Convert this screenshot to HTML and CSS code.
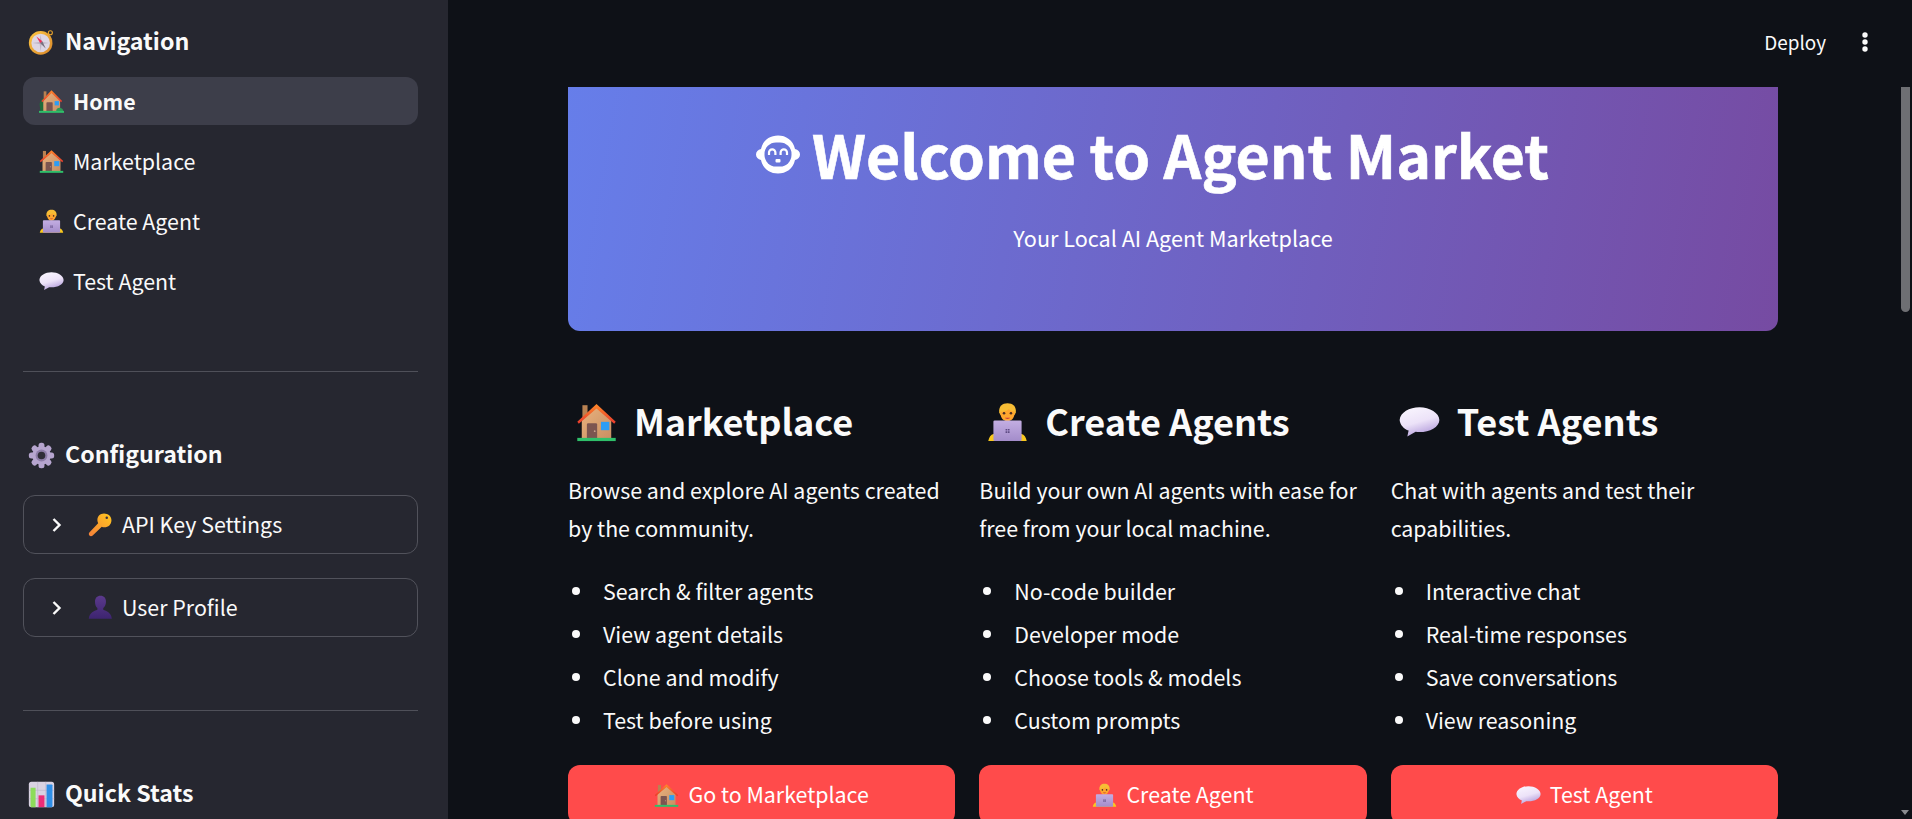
FILE: index.html
```html
<!DOCTYPE html>
<html>
<head>
    <meta charset="utf-8">
    <title>Agent Market</title>
    <link rel="stylesheet" href="styles.css">
</head>
<body>
    <!-- emoji drawn once here, reused with <use> -->
    <svg class="sprite" xmlns="http://www.w3.org/2000/svg">
        <defs>
            <linearGradient id="wall" x1="0" y1="0" x2="1" y2="1"><stop offset="0" stop-color="#e8b27e"/><stop offset="1" stop-color="#c98f63"/></linearGradient>
            <linearGradient id="roof" x1="0" y1="0" x2="0" y2="1"><stop offset="0" stop-color="#ff8a2a"/><stop offset="1" stop-color="#e8392c"/></linearGradient>
            <linearGradient id="bubble" x1="0" y1="0" x2="0.4" y2="1"><stop offset="0" stop-color="#fbf8ff"/><stop offset="0.6" stop-color="#ece2f8"/><stop offset="1" stop-color="#b9a4de"/></linearGradient>
            <linearGradient id="laptop" x1="0" y1="0" x2="0" y2="1"><stop offset="0" stop-color="#c3aee2"/><stop offset="1" stop-color="#a38cca"/></linearGradient>
            <linearGradient id="ring" x1="0" y1="0" x2="1" y2="1"><stop offset="0" stop-color="#ffc842"/><stop offset="1" stop-color="#d8862a"/></linearGradient>
            <linearGradient id="keygrad" x1="1" y1="0" x2="0" y2="1"><stop offset="0" stop-color="#ffc61e"/><stop offset="1" stop-color="#f5803a"/></linearGradient>
            <linearGradient id="bust" x1="0" y1="0" x2="0" y2="1"><stop offset="0" stop-color="#5b3a8c"/><stop offset="1" stop-color="#3d2470"/></linearGradient>
            <symbol id="e-house" viewBox="0 0 32 32">
                <rect x="5" y="2.500" width="4" height="10" fill="#b98252"/>
                <path d="M4.500 14 16 4.500 27.500 14v14h-23z" fill="url(#wall)"/>
                <path d="M1 15.500 16 1.500l15 14-1.200 1.400L16 5 2.200 16.900z" fill="url(#roof)"/>
                <path d="M8.500 28V17.500a1 1 0 0 1 1-1h6a1 1 0 0 1 1 1V28z" fill="#7c5550"/>
                <circle cx="14.600" cy="22.800" r=".7" fill="#c9a08e"/>
                <rect x="19.500" y="15.500" width="6.500" height="6.500" fill="#2e9df4"/>
                <rect x="1" y="28" width="30" height="2.500" fill="#2fc06a"/>
            </symbol>
            <symbol id="e-garden" viewBox="0 0 32 32">
                <path d="M1 22c-1-4 1-7 2.500-9 2-2 4-1 4 2v14H2z" fill="#1f6b3a"/>
                <rect x="6" y="3" width="3.500" height="9" fill="#b98252"/>
                <path d="M5.500 14 16 4.500 27 14v14H5.500z" fill="url(#wall)"/>
                <path d="M3 15.500 16 1.500l13.500 14-1.200 1.400L16 5 4.200 16.900z" fill="url(#roof)"/>
                <path d="M9.500 28V18a1 1 0 0 1 1-1h6a1 1 0 0 1 1 1v10z" fill="#7c5550"/>
                <rect x="20" y="15.500" width="5.500" height="5.500" fill="#2e9df4"/>
                <path d="M22 28c0-3 3-4.500 5-4s4 2 4 4z" fill="#2f9a55"/>
                <rect x="0" y="28" width="32" height="2.500" fill="#2fc06a"/>
            </symbol>
            <symbol id="e-coder" viewBox="0 0 32 32">
                <path d="M9.500 8C9 3.500 12 1 16 1s7 2.500 6.500 7l-.8 2H10.300z" fill="#f7bd35"/>
                <path d="M10.500 7.500c2 .5 5-.2 6.500-2 1.200 1.500 3 2 4.500 2 .3 4-1.500 7.500-5.500 7.500s-5.800-3.500-5.500-7.500z" fill="#ffa62e"/>
                <circle cx="13.300" cy="8.800" r="1" fill="#4a2f27"/>
                <circle cx="18.700" cy="8.800" r="1" fill="#4a2f27"/>
                <path d="M14 12.300h4c-.4 1.200-3.600 1.200-4 0z" fill="#c93a3a"/>
                <path d="M1 30.500c.5-3 2-5 4-5.500h22c2 .5 3.500 2.500 4 5.500z" fill="#f9c81e"/>
                <rect x="5" y="14.500" width="22" height="16" rx="1" fill="url(#laptop)"/>
                <path d="M14.500 21h1.300v1.300h-1.300zM16.300 21h1.300v1.300h-1.300zM14.500 22.800h1.300v1.300h-1.300zM16.300 22.800h1.300v1.300h-1.300z" fill="#5f4b84"/>
            </symbol>
            <symbol id="e-speech" viewBox="0 0 32 32">
                <path d="M16 4C8 4 1 8 .5 14c.3 4 3.500 7 7 8.300L6.500 27l6.500-3.700c1 .1 2 .2 3 .2 8 0 15.500-4 15.500-9.500S24 4 16 4z" fill="url(#bubble)"/>
            </symbol>
            <symbol id="e-compass" viewBox="0 0 32 32">
                <circle cx="26.500" cy="4.500" r="2.400" fill="none" stroke="#e8a42c" stroke-width="1.300"/>
                <circle cx="15" cy="16.500" r="14" fill="url(#ring)"/>
                <circle cx="15" cy="16.500" r="11" fill="#ddd6e4"/>
                <path d="M15 6.500 16.200 15.300 25 16.500 16.200 17.700 15 26.500 13.800 17.700 5 16.500 13.800 15.300z" fill="#bcb4c4"/>
                <path d="M10 9l7 5.500-2.500 2.500z" fill="#f0325a"/>
                <path d="M21 23l-6.500-6 2.500-2.500z" fill="#77707f"/>
            </symbol>
            <symbol id="e-gear" viewBox="0 0 32 32">
                <g fill="#b6a5cf">
                    <circle cx="16" cy="16" r="11"/>
                    <rect x="12.500" y="1" width="7" height="30" rx="3"/>
                    <rect x="12.500" y="1" width="7" height="30" rx="3" transform="rotate(45 16 16)"/>
                    <rect x="12.500" y="1" width="7" height="30" rx="3" transform="rotate(90 16 16)"/>
                    <rect x="12.500" y="1" width="7" height="30" rx="3" transform="rotate(135 16 16)"/>
                </g>
                <circle cx="16" cy="16" r="7" fill="#8d7da8"/>
                <circle cx="16" cy="16" r="4.500" fill="#2f2d38"/>
            </symbol>
            <symbol id="e-key" viewBox="0 0 32 32">
                <path d="M20.500 2c5 0 9.500 3.500 9.500 8.500 0 5.500-4 9-9 9-1.300 0-2.400-.2-3.400-.7L6 30c-1.200 1.200-3.200 1.200-4.200 0-1-1-1-2.800.2-4l11-11.500C12.500 13 12 12 12 10.500 12 5.500 15.500 2 20.500 2z" fill="url(#keygrad)"/>
                <circle cx="24" cy="7.500" r="1.600" fill="#3a3040"/>
            </symbol>
            <symbol id="e-bust" viewBox="0 0 32 32">
                <path d="M16 1c4.500 0 7 3 7 7.500 0 3.500-1.500 6.500-3.500 8v2.500c4 1.500 10 3.500 11 11.500H1c1-8 7-10 11-11.500v-2.500C10 15 9 12 9 8.500 9 4 11.500 1 16 1z" fill="url(#bust)"/>
            </symbol>
            <symbol id="e-chart" viewBox="0 0 32 32">
                <rect x="1" y="1" width="30" height="30" rx="3" fill="#d9d2e2"/>
                <path d="M11.500 1v30M21 1v30M1 11h30M1 21h30" stroke="#bfb6cc" stroke-width=".8"/>
                <path d="M3 8h6v23H4a1 1 0 0 1-1-1z" fill="#8ddc5a"/>
                <rect x="12.500" y="17" width="7" height="14" fill="#ec2d78"/>
                <path d="M22 4h6a1 1 0 0 1 1 1v25a1 1 0 0 1-1 1h-6z" fill="#2f8fe8"/>
            </symbol>
        </defs>
    </svg>

    <div class="app">
        <aside class="sidebar">
            <h3 class="side-title"><svg class="emoji-side"><use href="#e-compass"/></svg>Navigation</h3>
            <nav class="nav">
                <a class="nav-item active"><svg class="emoji-nav"><use href="#e-garden"/></svg>Home</a>
                <a class="nav-item"><svg class="emoji-nav"><use href="#e-house"/></svg>Marketplace</a>
                <a class="nav-item"><svg class="emoji-nav"><use href="#e-coder"/></svg>Create Agent</a>
                <a class="nav-item"><svg class="emoji-nav"><use href="#e-speech"/></svg>Test Agent</a>
            </nav>
            <hr class="side-rule first-rule">
            <h3 class="side-title"><svg class="emoji-side"><use href="#e-gear"/></svg>Configuration</h3>
            <div class="expander first-exp">
                <svg class="chevron" viewBox="0 0 10 14"><path d="M1.500 1l6 6-6 6" fill="none" stroke="#fafafa" stroke-width="2.400"/></svg>
                <svg class="emoji-nav"><use href="#e-key"/></svg>API Key Settings
            </div>
            <div class="expander">
                <svg class="chevron" viewBox="0 0 10 14"><path d="M1.500 1l6 6-6 6" fill="none" stroke="#fafafa" stroke-width="2.400"/></svg>
                <svg class="emoji-nav"><use href="#e-bust"/></svg>User Profile
            </div>
            <hr class="side-rule second-rule">
            <h3 class="side-title"><svg class="emoji-side"><use href="#e-chart"/></svg>Quick Stats</h3>
        </aside>

        <main class="main">
            <header class="topbar">
                <span class="deploy">Deploy</span>
                <svg class="menu-dots" viewBox="0 0 8 20"><circle cx="4" cy="3" r="2.700"/><circle cx="4" cy="10" r="2.700"/><circle cx="4" cy="17" r="2.700"/></svg>
            </header>
            <div class="scroll-area">
                <div class="content">
                    <section class="hero">
                        <h1 class="hero-title">
                            <svg class="robot" viewBox="0 0 46 39">
                                <path d="M6 14C8 5 15 .5 23 .5S38 5 40 14c3 .7 5 2.700 5 5.500S43 24.300 40 25C38 34 31 38.500 23 38.500S8 34 6 25c-3-.7-5-2.700-5-5.500S3 14.700 6 14z" fill="#fff"/>
                                <rect x="9.500" y="7.500" width="27" height="24" rx="11.500" fill="#6875da"/>
                                <path d="M14 20v-2.500a3.200 3.200 0 0 1 6.400 0V20M25.600 20v-2.500a3.200 3.200 0 0 1 6.400 0V20" fill="none" stroke="#fff" stroke-width="2.200"/>
                                <rect x="20.500" y="24" width="5" height="3.500" rx="1" fill="#fff"/>
                            </svg>Welcome to Agent Market
                        </h1>
                        <p class="hero-sub">Your Local AI Agent Marketplace</p>
                    </section>

                    <div class="columns">
                        <div class="col">
                            <h2 class="col-title"><svg class="emoji-head"><use href="#e-house"/></svg>Marketplace</h2>
                            <p>Browse and explore AI agents created by the community.</p>
                            <ul>
                                <li>Search &amp; filter agents</li>
                                <li>View agent details</li>
                                <li>Clone and modify</li>
                                <li>Test before using</li>
                            </ul>
                            <button class="action"><svg class="emoji-nav"><use href="#e-house"/></svg>Go to Marketplace</button>
                        </div>
                        <div class="col">
                            <h2 class="col-title"><svg class="emoji-head"><use href="#e-coder"/></svg>Create Agents</h2>
                            <p>Build your own AI agents with ease for free from your local machine.</p>
                            <ul>
                                <li>No-code builder</li>
                                <li>Developer mode</li>
                                <li>Choose tools &amp; models</li>
                                <li>Custom prompts</li>
                            </ul>
                            <button class="action"><svg class="emoji-nav"><use href="#e-coder"/></svg>Create Agent</button>
                        </div>
                        <div class="col">
                            <h2 class="col-title"><svg class="emoji-head"><use href="#e-speech"/></svg>Test Agents</h2>
                            <p>Chat with agents and test their capabilities.</p>
                            <ul>
                                <li>Interactive chat</li>
                                <li>Real-time responses</li>
                                <li>Save conversations</li>
                                <li>View reasoning</li>
                            </ul>
                            <button class="action"><svg class="emoji-nav"><use href="#e-speech"/></svg>Test Agent</button>
                        </div>
                    </div>
                </div>
                <div class="scroll-thumb"></div>
                <div class="scroll-arrow"></div>
            </div>
        </main>
    </div>
</body>
</html>
```

FILE: styles.css
```css
html, body {
    margin: 0;
    height: 100%;
    overflow: hidden;
}

body {
    font-family: "Noto Sans CJK SC", "Noto Sans", sans-serif;
    background: #0e1117;
    color: #fafafa;
}

.sprite {
    display: block;
    width: 0;
    height: 0;
}

.app {
    display: flex;
    height: 819px;
}

/* sidebar */
.sidebar {
    width: 448px;
    flex: none;
    box-sizing: border-box;
    padding: 22px 30px 0 23px;
    background: #262730;
    overflow: hidden;
}

.side-title {
    display: flex;
    align-items: center;
    box-sizing: border-box;
    margin: 0;
    height: 40px;
    padding: 0 0 3px 5px;
    font-size: 23.2px;
    font-weight: 600;
    line-height: 37px;
}

.emoji-side {
    width: 27px;
    height: 27px;
    margin: 3px 10px 0 0;
    flex: none;
}

.emoji-nav {
    width: 25px;
    height: 25px;
    margin-right: 9px;
    flex: none;
}

.nav {
    display: flex;
    flex-direction: column;
    gap: 12px;
    margin-top: 15px;
}

.nav-item {
    display: flex;
    align-items: center;
    box-sizing: border-box;
    height: 48px;
    padding: 0 0 2px 16px;
    border-radius: 12px;
    font-size: 21.4px;
}

.nav-item .emoji-nav {
    margin-top: 2px;
}

.nav-item.active {
    background: #3d3e4a;
    font-weight: 600;
}

.side-rule {
    margin: 0;
    height: 1px;
    border: none;
    background: #4f5059;
}

.first-rule {
    margin: 66px 0 63px;
}

.second-rule {
    margin: 73px 0 63px;
}

.expander {
    display: flex;
    align-items: center;
    height: 59px;
    box-sizing: border-box;
    margin-top: 24px;
    padding: 0 0 3px 28px;
    border: 1px solid #51525b;
    border-radius: 12px;
    font-size: 21.4px;
}

.expander svg {
    margin-top: 3px;
}

.first-exp {
    margin-top: 20px;
}

.chevron {
    width: 10px;
    height: 14px;
    margin-right: 26px;
    flex: none;
}

/* main area */
.main {
    flex: 1;
    display: flex;
    flex-direction: column;
    min-width: 0;
}

.topbar {
    height: 87px;
    box-sizing: border-box;
    flex: none;
    display: flex;
    align-items: center;
    justify-content: flex-end;
    padding: 0 43px 4px 0;
}

.deploy {
    font-size: 18.9px;
    margin-right: 35px;
}

.menu-dots {
    width: 8px;
    height: 20px;
    fill: #fafafa;
}

.scroll-area {
    flex: 1;
    position: relative;
    overflow: hidden;
}

.content {
    padding: 0 134px 0 120px;
}

.hero {
    margin-top: -30px;
    padding: 57px 0 74px;
    border-radius: 12px;
    background: linear-gradient(100deg, #667eea 0%, #764ba2 100%);
    text-align: center;
    color: white;
}

.hero-title {
    display: flex;
    align-items: center;
    justify-content: center;
    margin: 0;
    padding-right: 42px;
    font-size: 59px;
    font-weight: 700;
    line-height: 80px;
    -webkit-text-stroke: 0.6px white;
}

.robot {
    width: 46px;
    height: 39px;
    margin-right: 11px;
    flex: none;
}

.hero-sub {
    margin: 25px 0 0;
    font-size: 21.6px;
    line-height: 38px;
}

.columns {
    display: grid;
    grid-template-columns: repeat(3, 1fr);
    gap: 24px;
    margin-top: 61px;
}

.col-title {
    display: flex;
    align-items: center;
    box-sizing: border-box;
    margin: 0;
    height: 60px;
    padding: 0 0 4px 8px;
    font-size: 36.1px;
    font-weight: 600;
}

.emoji-head {
    width: 41px;
    height: 41px;
    margin: 4px 17px 0 0;
    flex: none;
}

.col p {
    margin: 19px 0 0;
    font-size: 21.4px;
    line-height: 38.4px;
}

.col ul {
    margin: 24px 0 0;
    padding: 0;
    list-style: none;
    font-size: 21.4px;
    line-height: 38.4px;
}

.col li {
    display: flex;
    align-items: center;
}

.col li::before {
    content: "";
    width: 8px;
    height: 8px;
    margin: 0 23px 0 4px;
    border-radius: 50%;
    background: #fafafa;
    flex: none;
}

.col li + li {
    margin-top: 4.6px;
}

.action {
    display: flex;
    align-items: center;
    justify-content: center;
    width: 100%;
    height: 60px;
    margin-top: 26px;
    padding: 0 0 3px;
    border: none;
    border-radius: 12px;
    background: #ff4b4b;
    color: white;
    font-family: inherit;
    font-size: 21.4px;
}

.action .emoji-nav {
    margin-top: 3px;
}

.scroll-thumb {
    position: absolute;
    top: 0;
    right: 2px;
    width: 9px;
    height: 225px;
    border-radius: 0 0 5px 5px;
    background: #6e6f73;
}

.scroll-arrow {
    position: absolute;
    right: 3px;
    bottom: 4px;
    border-left: 4px solid transparent;
    border-right: 4px solid transparent;
    border-top: 5px solid #8a8b8f;
}
```
